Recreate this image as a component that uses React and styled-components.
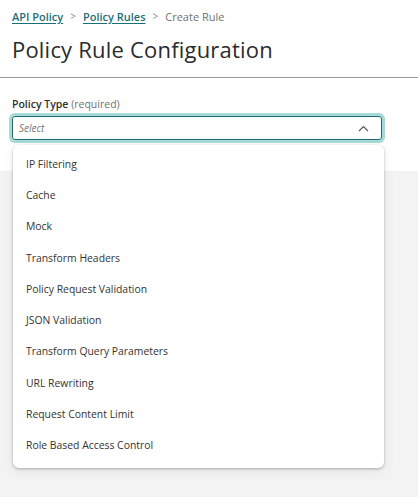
import React from "react";
import styled, { createGlobalStyle } from "styled-components";

const GlobalStyle = createGlobalStyle`
    body {
        margin: 0;
        background: #f3f3f3;
        font-family: "Open Sans", "Liberation Sans", sans-serif;
        color: #333;
    }
`;

const Page = styled.div`
    min-height: 497px;
    background: #f3f3f3;
`;

const Header = styled.div`
    background: #fff;
    padding: 8px 12px 0;
    border-bottom: 1px solid #9a9a9a;
    height: 69px;
`;

const Crumbs = styled.div`
    display: flex;
    align-items: center;
    gap: 7px;
    font-size: 11px;
    color: #707070;
    height: 16px;
`;

const CrumbLink = styled.a`
    color: #1b6f7a;
    font-weight: 600;
    text-decoration: underline;
    text-underline-offset: 2px;
`;

const Sep = styled.span`
    color: #8a8a8a;
    font-size: 10px;
`;

const Title = styled.h1`
    margin: 10px 0 0;
    font-size: 22px;
    font-weight: 400;
    color: #2b2b2b;
    letter-spacing: 0.2px;
`;

const Form = styled.div`
    background: #fff;
    padding: 19px 36px 31px 12px;
`;

const Label = styled.div`
    font-size: 10.5px;
    font-weight: 600;
    color: #2f2f2f;
    margin-bottom: 5px;

    span {
        font-weight: 400;
        color: #6f6f6f;
    }
`;

const Field = styled.div`
    position: relative;
`;

const SelectBox = styled.div`
    display: flex;
    align-items: center;
    justify-content: space-between;
    height: 22px;
    padding: 0 12px 0 6px;
    border: 1px solid #1e6b73;
    border-radius: 3px;
    box-shadow: 0 0 0 3px #a6dad7;
    font-size: 10px;
    font-style: italic;
    color: #777;
`;

const Menu = styled.ul`
    position: absolute;
    top: 29px;
    left: 1px;
    right: -2px;
    margin: 0;
    padding: 3px 0 7px;
    list-style: none;
    background: #fff;
    border-radius: 6px;
    box-shadow: 0 1px 3px rgba(0, 0, 0, 0.28), 0 4px 14px rgba(0, 0, 0, 0.06);
    z-index: 2;
`;

const Item = styled.li`
    height: 31.3px;
    display: flex;
    align-items: center;
    padding-left: 13px;
    font-size: 10.4px;
    color: #333;
`;

const options = [
    "IP Filtering",
    "Cache",
    "Mock",
    "Transform Headers",
    "Policy Request Validation",
    "JSON Validation",
    "Transform Query Parameters",
    "URL Rewriting",
    "Request Content Limit",
    "Role Based Access Control",
];

function App() {
    return (
        <Page>
            <GlobalStyle />
            <Header>
                <Crumbs>
                    <CrumbLink>API Policy</CrumbLink>
                    <Sep>&gt;</Sep>
                    <CrumbLink>Policy Rules</CrumbLink>
                    <Sep>&gt;</Sep>
                    <span>Create Rule</span>
                </Crumbs>
                <Title>Policy Rule Configuration</Title>
            </Header>
            <Form>
                <Label>
                    Policy Type <span>(required)</span>
                </Label>
                <Field>
                    <SelectBox>
                        Select
                        <svg width="11" height="7" viewBox="0 0 11 7">
                            <path
                                d="M1 6 L5.5 1.5 L10 6"
                                fill="none"
                                stroke="#555"
                                strokeWidth="1.1"
                            />
                        </svg>
                    </SelectBox>
                    <Menu>
                        {options.map((o) => (
                            <Item key={o}>{o}</Item>
                        ))}
                    </Menu>
                </Field>
            </Form>
        </Page>
    );
}

export default App;
